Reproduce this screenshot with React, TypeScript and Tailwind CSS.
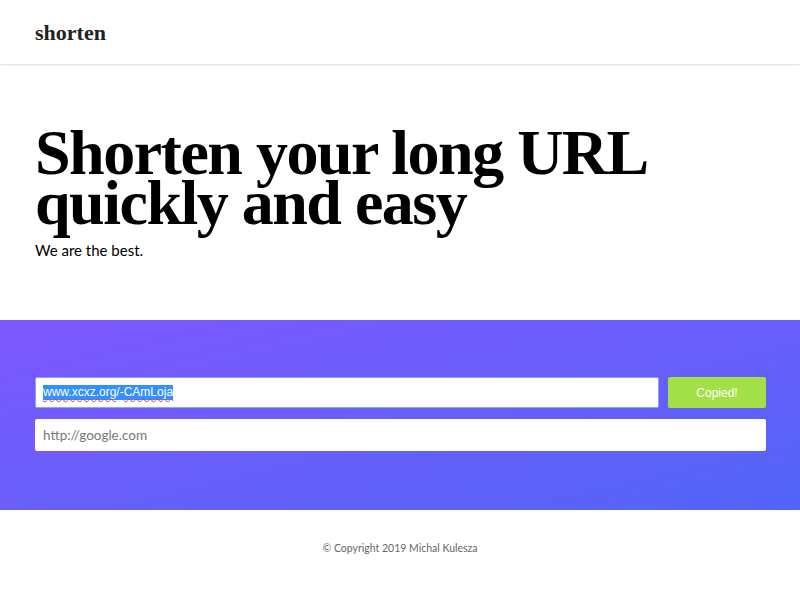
import React, { useState } from "react";

const serif = "font-['Liberation_Serif',serif]";
const lato = "font-['Lato','Liberation_Sans',sans-serif]";
const arial = "font-['Liberation_Sans',sans-serif]";

const Header = () => (
  <header className="h-[65px] border-b border-[#e6e6e6] shadow-[0_1px_2px_rgba(0,0,0,0.06)] flex items-center px-[35px]">
    <span className={`${serif} text-[22px] font-bold text-[#222]`}>shorten</span>
  </header>
);

const Hero = () => (
  <section className="h-[255px] px-[35px] pt-[63px]">
    <h1 className={`${serif} text-[64px] font-bold leading-[50px] text-black tracking-[-1.5px]`}>
      Shorten your long URL
      <br />
      quickly and easy
    </h1>
    <p className={`${lato} text-[15px] leading-[22px] text-black mt-[11px]`}>We are the best.</p>
  </section>
);

const misspelt = "underline decoration-wavy decoration-[#e53935] decoration-1 underline-offset-2";

const Form = () => {
  const [url, setUrl] = useState("");
  return (
    <section className="h-[190px] bg-gradient-to-br from-[#7c57fe] to-[#5165f7] pl-[35px] pr-[34px] pt-[57px]">
      <div className="flex gap-[9px]">
        <div className="flex-1 h-[31px] bg-white rounded-[2px] border border-[#8aa4ff] flex items-center px-[7px]">
          <span className={`${arial} text-[12px] bg-[#3390ff] text-white leading-[15px]`}>
            <span className={misspelt}>www.xcxz.org</span>/-<span className={misspelt}>CAmLoja</span>
          </span>
        </div>
        <button className={`${arial} w-[98px] h-[31px] rounded-[2px] bg-[#a3e048] text-white text-[12px]`}>
          Copied!
        </button>
      </div>
      <input
        value={url}
        onChange={(e) => setUrl(e.target.value)}
        placeholder="http://google.com"
        className={`${lato} mt-[11px] w-full h-[32px] bg-white rounded-[2px] px-[8px] text-[13.5px] text-[#333] placeholder:text-[#777] outline-none`}
      />
    </section>
  );
};

const Footer = () => (
  <footer className={`${lato} text-center text-[10.5px] text-[#666] pt-[31px]`}>
    © Copyright 2019 Michal Kulesza
  </footer>
);

export default function App() {
  return (
    <div className="w-full min-h-screen bg-white">
      <Header />
      <Hero />
      <Form />
      <Footer />
    </div>
  );
}
